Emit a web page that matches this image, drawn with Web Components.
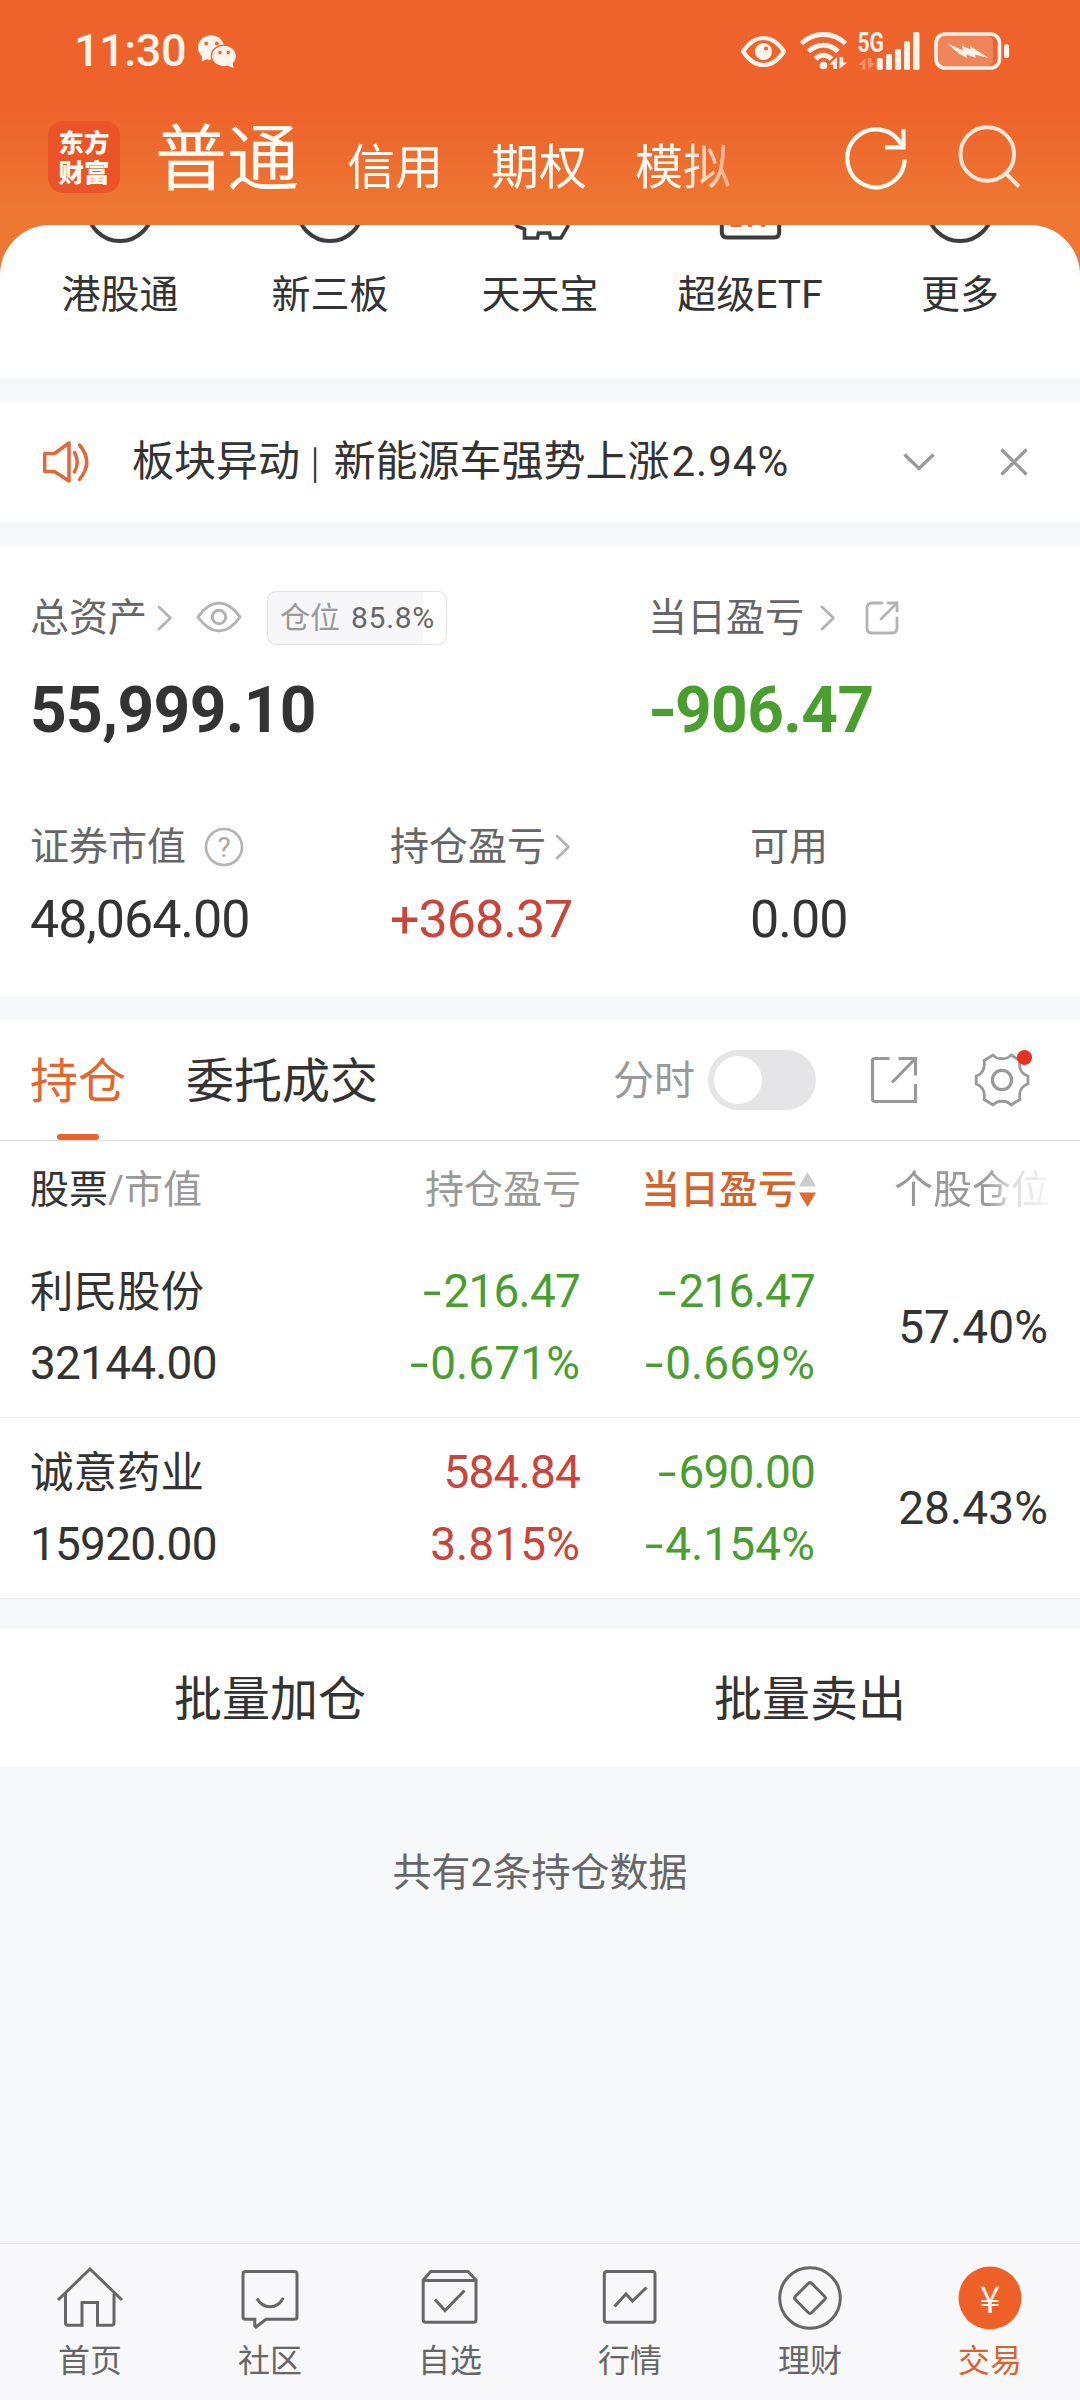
<!DOCTYPE html>
<html lang="zh-CN">
<head>
<meta charset="utf-8">
<title>交易</title>
<style>
  html, body {
    margin: 0;
    background: #f7f8fa;
  }
  body {
    width: 1080px;
    height: 2400px;
    overflow: hidden;
    font-family: Roboto, "Noto Sans CJK SC", sans-serif;
    font-size: 39px;
    color: #333;
  }
</style>
</head>
<body>
<trade-page></trade-page>

<script>
// name: [width, height, markup]
const ICONS = {
  wechat: [39, 33, `<g fill="#fff3ec"><ellipse cx="13" cy="12.5" rx="13" ry="12.3"/><path d="M4 20L3.800 26.500L11 23z"/></g>
    <g fill="#ee622b"><circle cx="8.300" cy="8.500" r="1.900"/><circle cx="18.800" cy="8.500" r="1.900"/><ellipse cx="26" cy="21" rx="13.300" ry="11.500"/></g>
    <g fill="#fff3ec"><ellipse cx="26" cy="21" rx="11.800" ry="10.200"/><path d="M28 30L35.500 33L34.500 26z"/></g>
    <g fill="#ee622b"><circle cx="22" cy="17.500" r="1.700"/><circle cx="30.200" cy="17.500" r="1.700"/></g>`],
  eyeSolid: [45, 31, `<path d="M2 15.500C8 6.500 15 2 22.500 2S37 6.500 43 15.500C37 24.500 30 29 22.500 29S8 24.500 2 15.500z" fill="none" stroke="#fff3ec" stroke-width="4.200" stroke-linejoin="round"/><circle cx="22.500" cy="15.500" r="8.600" fill="#fff3ec"/><circle cx="25" cy="12.500" r="2" fill="#ee622b"/>`],
  wifi: [47, 38, `<g fill="none" stroke="#fff3ec" stroke-width="5"><path d="M1.500 11.500C14 -.5 33 -.5 45.500 11.500"/><path d="M8.500 19.500C17 11 30 11 38 19.500"/><path d="M15.500 27C20 22 27 22 31.500 27"/></g><circle cx="23.500" cy="33.500" r="3.800" fill="#fff3ec"/>
    <path d="M37 25v12h-3.800v-4.500h-4zM39.500 25v12l7.500-6.500h-3.800V25z" fill="#fff3ec"/>`],
  signal: [62, 38, `<text x="-.5" y="19.500" font-family="Roboto" font-weight="700" font-size="27.500" textLength="26.500" lengthAdjust="spacingAndGlyphs" fill="#fff3ec">5G</text>
    <path d="M7.500 26v11.500H4.500V33H.5zM10 26v11.500l7.500-6.500h-4V26z" fill="#f58f68"/>
    <g fill="#fff3ec"><rect x="18.800" y="26" width="6" height="12" rx="1.800"/><rect x="28" y="22" width="6" height="16" rx="1.800"/><rect x="37" y="17" width="6" height="21" rx="1.800"/><rect x="46" y="9" width="6" height="29" rx="1.800"/><rect x="55" y="0" width="6.500" height="38" rx="1.800"/></g>`],
  battery: [75, 38, `<rect x="4" y="4" width="55" height="30" rx="5" fill="#f08459"/><rect x="2" y="2" width="63.500" height="34" rx="9" fill="none" stroke="#fff3ec" stroke-width="3.600"/><rect x="70" y="12" width="5" height="14" rx="2.500" fill="#fff3ec"/>
    <path d="M12.500 11L29 18.500L28 13.500L36.500 17.500L36 14L54.500 26L40.500 22.500L42 26L32.500 22.500L33 26L25.500 22z" fill="#fff3ec"/>`],
  refresh: [64, 64, `<g fill="none" stroke="#fffaf2" stroke-width="4.200"><path d="M60.700 33.500A28.700 29 0 1 1 57.500 19"/><path d="M59.500 3V21.300H41"/></g>`],
  search: [64, 64, `<g fill="none" stroke="#fee7d8" stroke-width="4"><circle cx="30.300" cy="28" r="26.800"/><path d="M48.500 47L62 60.500"/></g>`],
  menuRing: [72, 20, `<circle cx="36" cy="-16.500" r="32.500" fill="none" stroke="#3a3c40" stroke-width="4"/>`],
  menuPig: [72, 20, `<path d="M10 -3L13.500 1.500L20.500 4V13H33.500L34.500 8H45.500L46.500 13H57L64.500 0" fill="none" stroke="#3a3c40" stroke-width="3.600"/>`],
  menuEtf: [72, 20, `<path d="M7.800 -6V7Q7.800 12.500 13 12.500H60Q65.200 12.500 65.200 7V-6" fill="none" stroke="#3a3c40" stroke-width="4"/><g fill="#ee6a33"><rect x="16" y="-3" width="12" height="5" rx="2"/><rect x="34" y="-3" width="4" height="5" rx="1"/><rect x="47" y="-3" width="4" height="5" rx="1"/></g>`],
  speaker: [46, 42, `<g fill="none" stroke="#e0683a" stroke-width="3.500" stroke-linejoin="round" stroke-linecap="round"><path d="M1.700 12.500H11.500L26 2V40L11.500 30.500H1.700z"/><path d="M31.500 11.500Q37 21 31.500 31"/><path d="M36.500 4Q51 21 36.500 38.500"/></g>`],
  down: [32, 18, `<path d="M1.500 1.500L16 15.500L30.500 1.500" fill="none" stroke="#999" stroke-width="3.200"/>`],
  close: [28, 28, `<path d="M1.500 1.500L26.500 26.500M26.500 1.500L1.500 26.500" fill="none" stroke="#999" stroke-width="3.200"/>`],
  right: [16, 26, `<path d="M2 2L13.500 13L2 24" fill="none" stroke="#b3b3b3" stroke-width="2.800" stroke-linecap="round" stroke-linejoin="round"/>`],
  eye: [46, 32, `<g fill="none" stroke="#b3b3b3" stroke-width="3" stroke-linejoin="round"><path d="M2 16C9 6 15.500 2 23 2S37 6 44 16C37 26 30.500 30 23 30S9 26 2 16z"/><circle cx="23" cy="16" r="6.700"/></g>`],
  help: [40, 40, `<circle cx="20" cy="20" r="18" fill="none" stroke="#b3b3b3" stroke-width="2.600"/><text x="20" y="29.500" text-anchor="middle" font-family="Roboto" font-size="28" fill="#a8a8a8">?</text>`],
  shareSmall: [34, 34, `<g fill="none" stroke="#b3b3b3" stroke-width="2.800" stroke-linecap="round"><path d="M17 2H7Q2 2 2 7V27Q2 32 7 32H27Q32 32 32 27V17"/><path d="M23 2H32V10"/><path d="M31.500 2.500L16 18"/></g>`],
  share: [48, 48, `<g fill="none" stroke="#999" stroke-width="3.200"><path d="M19.500 2.500H5Q2.500 2.500 2.500 5V43Q2.500 45.500 5 45.500H45.500V28"/><path d="M28.500 2.500H45.500V19.500"/><path d="M45 3L22 26.500"/></g>`],
  gear: [54, 54, `<g fill="none" stroke="#999" stroke-width="2.800" stroke-linejoin="round"><path d="M18.200 2C22 7 32 7 36 2L45 7.500C43.500 15 46.500 21 53 23V31C46.500 33 43.500 39 45 46.500L36 52C32 47 22 47 18.200 52L9 46.500C10.500 39 7.500 33 1.200 31V23C7.500 21 10.500 15 9 7.500z"/><circle cx="27" cy="27" r="9.600" stroke-width="3.200"/></g><circle cx="49.500" cy="4.500" r="7.600" fill="#e63226"/>`],
  sort: [17, 35, `<path d="M8.500 0L17 14.500H0z" fill="#ccc"/><path d="M0 20.500H17L8.500 35z" fill="#e4682f"/>`],
  home: [68, 64, `<path d="M2 34L34 3L66 34" /><path d="M9.500 27.500V57Q9.500 59.300 12 59.300H26V36.500H41.500V59.300H55.500Q58 59.300 58 57V27.500"/>`],
  community: [68, 64, `<path d="M9.500 5.500H58.500Q61 5.500 61 8V51Q61 53.300 58.500 53.300H30L20 61L18.800 60V53.300H9.500Q7 53.300 7 51V8Q7 5.500 9.500 5.500z"/><path d="M21 32.500Q25.500 40.800 34 40.800T47.300 32"/>`],
  watch: [68, 64, `<path d="M7.200 14L14.800 5.500H52L60 14V54Q60 56.200 57.500 56.200H9.800Q7.200 56.200 7.200 54z"/><path d="M7.200 14.500H60"/><path d="M19 33.500L29 44.500L48.500 24.500"/>`],
  market: [68, 64, `<rect x="8.300" y="5.500" width="50.700" height="50.700" rx="2.500"/><path d="M18.500 40.500L30 28L36.500 35L50.500 21.500"/>`],
  wealth: [68, 64, `<circle cx="34" cy="32" r="30.300"/><rect x="22.500" y="20.500" width="23" height="23" rx="2.500" transform="rotate(45 34 32)"/>`],
  trade: [68, 64, `<circle cx="34" cy="32" r="31.500" fill="#ed6129" stroke="none"/><text x="34" y="46.500" text-anchor="middle" font-family="Noto Sans CJK SC" font-size="37" fill="#fff3e8" stroke="none">¥</text>`],
};

class AppIcon extends HTMLElement {
  constructor() {
    super();
    this.attachShadow({ mode: "open" });
  }

  connectedCallback() {
    const [w, h, markup] = ICONS[this.getAttribute("name")];
    this.shadowRoot.innerHTML = `
      <style>
        :host { display: block; flex: none; width: ${w}px; height: ${h}px; }
        svg { display: block; overflow: visible; }
      </style>
      <svg width="${w}" height="${h}" viewBox="0 0 ${w} ${h}">${markup}</svg>`;
  }
}
customElements.define("app-icon", AppIcon);

// Elements without logic only need a name and a template
function define(name, html) {
  const template = document.createElement("template");
  template.innerHTML = html;
  customElements.define(name, class extends HTMLElement {
    constructor() {
      super();
      this.attachShadow({ mode: "open" });
      this.shadowRoot.appendChild(template.content.cloneNode(true));
    }
  });
}

define("status-bar", `
  <style>
    :host { display: flex; align-items: center; height: 102px; padding: 0 71px 0 74px; }
    .time { width: 124px; font-size: 45px; font-weight: 500; line-height: 60px; letter-spacing: -.4px; color: #fff3ec; }
    .right { display: flex; align-items: center; margin-left: auto; }
    .right app-icon + app-icon { margin-left: 14px; }
    .right app-icon[name="signal"] { margin-left: 11px; }
  </style>
  <span class="time">11:30</span>
  <app-icon name="wechat"></app-icon>
  <div class="right">
    <app-icon name="eyeSolid"></app-icon>
    <app-icon name="wifi"></app-icon>
    <app-icon name="signal"></app-icon>
    <app-icon name="battery"></app-icon>
  </div>
`);

define("app-header", `
  <style>
    :host { display: block; height: 225px; background: linear-gradient(#ee622b 105px, #ed7733 210px); }
    .bar { display: flex; align-items: flex-start; padding-left: 48px; }
    .logo { width: 72px; height: 65px; padding-top: 7px; margin-top: 19px; border-radius: 15px; background: #eb5329;
      color: #fffaf2; font: 900 25.500px/30px Roboto, "Noto Sans CJK SC", sans-serif; text-align: center; }
    .logo span { display: block; }
    nav { display: flex; align-items: baseline; gap: 48px; width: 600px; height: 110px; margin: 8px 0 0 35px;
      overflow: hidden; white-space: nowrap; font-size: 48px; line-height: 100px; color: #fffaf2;
      -webkit-mask-image: linear-gradient(90deg, #000 530px, transparent 610px);
      mask-image: linear-gradient(90deg, #000 530px, transparent 610px); }
    .on { font-size: 72px; }
    app-icon { margin-top: 24px; }
    .refresh { margin-left: 89px; }
    .search { margin-left: 49px; }
  </style>
  <status-bar></status-bar>
  <div class="bar">
    <div class="logo"><span>东方</span><span>财富</span></div>
    <nav><span class="on">普通</span><span>信用</span><span>期权</span><span>模拟</span></nav>
    <app-icon class="refresh" name="refresh"></app-icon>
    <app-icon class="search" name="search"></app-icon>
  </div>
`);

class MenuItem extends HTMLElement {
  constructor() {
    super();
    this.attachShadow({ mode: "open" });
    this.shadowRoot.innerHTML = `
      <style>
        :host { display: flex; flex-direction: column; align-items: center; width: 210px; }
        .clip { height: 20px; overflow: hidden; }
        span { margin-top: 25px; line-height: 50px; white-space: nowrap; }
      </style>
      <div class="clip"><app-icon name="${this.getAttribute("icon")}"></app-icon></div>
      <span><slot></slot></span>`;
  }
}
customElements.define("menu-item", MenuItem);

define("menu-sheet", `
  <style>
    :host { display: block; height: 153px; background: #ed7733; }
    .sheet { display: flex; height: 153px; padding: 0 15px; border-radius: 50px 50px 0 0; background: #fff; }
  </style>
  <div class="sheet"><slot></slot></div>
`);

define("notice-bar", `
  <style>
    :host { display: flex; align-items: center; height: 120px; margin-top: 24px; padding: 0 52px 0 43px; background: #fff; }
    span { flex: 1; margin-left: 43px; font-size: 42px; line-height: 60px; white-space: pre; }
    b { font-weight: 400; letter-spacing: 1px; margin-left: 2px; }
    i { font-style: normal; font-size: 32px; letter-spacing: 3.500px; font-family: "Noto Sans CJK SC"; position: relative; top: -2px; }
    app-icon[name="close"] { margin-left: 65px; }
  </style>
  <app-icon name="speaker"></app-icon>
  <span>板块异动<i> | </i>新能源车强势上涨<b>2.94%</b></span>
  <app-icon name="down"></app-icon>
  <app-icon name="close"></app-icon>
`);

define("asset-figure", `
  <style>
    :host { display: block; }
    .label { display: flex; align-items: center; height: 54px; line-height: 54px; color: #666; white-space: nowrap; }
    .value { margin-top: 16px; font-size: 52px; line-height: 60px; letter-spacing: -1px; }
    :host([big]) .value { margin-top: 36px; font-size: 64px; font-weight: 700; letter-spacing: -.6px; }
    :host([up]) .value { color: #cb433a; }
    :host([down]) .value { color: #4a9d2f; }
    ::slotted(.minus) { display: inline-block; width: 27px; transform: scaleX(1.18); transform-origin: 0 50%; }
  </style>
  <div class="label"><slot name="label"></slot></div>
  <div class="value"><slot></slot></div>
`);

define("position-tag", `
  <style>
    :host { display: flex; align-items: center; box-sizing: border-box; width: 180px; height: 54px; padding-left: 12px;
      border: 1px solid #e3e3e6; border-radius: 9px; font-size: 30px; line-height: 50px; color: #666;
      letter-spacing: .7px; background: linear-gradient(90deg, #f7f7fa 155px, #fff 155px); }
    span { color: #999; margin-right: 11px; letter-spacing: 0; }
  </style>
  <span>仓位</span><slot></slot>
`);

define("asset-summary", `
  <style>
    :host { display: block; box-sizing: border-box; height: 450px; margin-top: 24px; padding: 45px 0 0 30px; background: #fff; }
    .top { display: grid; grid-template-columns: 618px 1fr; }
    .rest { display: grid; grid-template-columns: repeat(3, 360px); margin-top: 79px; }
  </style>
  <div class="top">
    <asset-figure big>
      <span slot="label">总资产</span>
      <app-icon slot="label" name="right" style="margin-left:10px"></app-icon>
      <app-icon slot="label" name="eye" style="margin:-3px 0 0 23px"></app-icon>
      <position-tag slot="label" style="margin-left:25px">85.8%</position-tag>
      55,999.10
    </asset-figure>
    <asset-figure big down>
      <span slot="label">当日盈亏</span>
      <app-icon slot="label" name="right" style="margin-left:16px"></app-icon>
      <app-icon slot="label" name="shareSmall" style="margin-left:29px"></app-icon>
      <span class="minus">-</span>906.47
    </asset-figure>
  </div>
  <div class="rest">
    <asset-figure>
      <span slot="label">证券市值</span>
      <app-icon slot="label" name="help" style="margin-left:18px"></app-icon>
      48,064.00
    </asset-figure>
    <asset-figure up>
      <span slot="label">持仓盈亏</span>
      <app-icon slot="label" name="right" style="margin-left:9px"></app-icon>
      +368.37
    </asset-figure>
    <asset-figure><span slot="label">可用</span>0.00</asset-figure>
  </div>
`);

define("holding-tabs", `
  <style>
    :host { display: flex; align-items: center; height: 120px; margin-top: 24px; padding: 0 51px 0 30px;
      border-bottom: 1px solid #dcdcdc; background: #fff; font-size: 48px; line-height: 60px; }
    .tab { display: flex; flex-direction: column; align-items: center; height: 120px; margin-right: 60px; }
    .tab span { margin-top: 32px; }
    .on { color: #e5652f; }
    .on::after { content: ""; width: 42px; height: 6px; margin-top: 22px; border-radius: 3px; background: #e5632f; }
    .minute { margin: 2px 0 0 auto; font-size: 41px; color: #999; }
    .toggle { box-sizing: border-box; width: 108px; height: 60px; margin: 0 54px 0 13px; padding: 6px; border-radius: 30px; background: #e5e5e7; }
    .toggle::before { content: ""; display: block; width: 48px; height: 48px; border-radius: 50%; background: #fff; }
    app-icon[name="gear"] { margin-left: 57px; }
  </style>
  <div class="tab on"><span>持仓</span></div>
  <div class="tab"><span>委托成交</span></div>
  <span class="minute">分时</span>
  <div class="toggle"></div>
  <app-icon name="share"></app-icon>
  <app-icon name="gear"></app-icon>
`);

const COLUMNS = "display: grid; grid-template-columns: 250px 300px 235px 233px; padding: 0 32px 0 30px;";

define("holding-head", `
  <style>
    :host { ${COLUMNS} align-items: center; height: 96px; background: #fff; line-height: 50px; color: #999; white-space: nowrap; text-align: right; }
    span { margin: 1px -1px 0 0; }
    .name { text-align: left; }
    .name b { font-weight: 400; color: #333; }
    .sorted { display: flex; align-items: center; justify-content: flex-end; gap: 2px; color: #d4632e; font-weight: 500; }
    .faded { margin-right: -2px; -webkit-mask-image: linear-gradient(90deg, #000 172px, rgba(0,0,0,.35) 196px, rgba(0,0,0,.1) 233px); }
  </style>
  <span class="name"><b>股票</b>/市值</span>
  <span>持仓盈亏</span>
  <span class="sorted">当日盈亏<app-icon name="sort"></app-icon></span>
  <span class="faded">个股仓位</span>
`);

class HoldingRow extends HTMLElement {
  constructor() {
    super();
    this.attachShadow({ mode: "open" });
    const get = (name) => this.getAttribute(name);
    // The minus is drawn wider than the font's own hyphen
    const signed = (text) => text.replace("-", "<i>-</i>");
    const pair = (text) => {
      const [amount, percent] = text.split(" ");
      const tone = amount.startsWith("-") ? "down" : "up";
      return `<div class="num ${tone}"><span>${signed(amount)}</span><span class="pct">${signed(percent)}</span></div>`;
    };
    this.shadowRoot.innerHTML = `
      <style>
        :host { ${COLUMNS} align-items: center; height: 180px; border-bottom: 1px solid #ececee; background: #fff; }
        div { display: flex; flex-direction: column; font-size: 46px; line-height: 72px; letter-spacing: -.8px; }
        .name { font-size: 43.5px; letter-spacing: 0; position: relative; top: 2px; }
        .num { text-align: right; }
        .pct { letter-spacing: .1px; }
        i { display: inline-block; width: 20px; font-style: normal; text-align: left; transform: scaleX(1.45); transform-origin: 0 50%; }
        .up { color: #cb433a; }
        .down { color: #4a9d2f; }
      </style>
      <div><span class="name">${get("name")}</span><span>${get("worth")}</span></div>
      ${pair(get("total"))}
      ${pair(get("today"))}
      <div class="num"><span class="pct">${get("share")}</span></div>`;
  }
}
customElements.define("holding-row", HoldingRow);

define("batch-actions", `
  <style>
    :host { display: flex; height: 138px; margin-top: 30px; background: #fff; font-size: 48px; }
    span { flex: 1; text-align: center; line-height: 141px; }
    span:first-child { border-right: 1px solid #f4f4f6; }
  </style>
  <span>批量加仓</span><span>批量卖出</span>
`);

class TabItem extends HTMLElement {
  constructor() {
    super();
    this.attachShadow({ mode: "open" });
    this.shadowRoot.innerHTML = `
      <style>
        :host { display: flex; flex-direction: column; align-items: center; width: 180px; padding-top: 22px; }
        app-icon { fill: none; stroke: #666; stroke-width: 3; }
        span { margin-top: 10px; font-size: 32px; line-height: 42px; color: #666; }
        :host([active]) span { color: #d9632f; }
      </style>
      <app-icon name="${this.getAttribute("icon")}"></app-icon>
      <span><slot></slot></span>`;
  }
}
customElements.define("tab-item", TabItem);

define("trade-page", `
  <style>
    :host { display: flex; flex-direction: column; height: 2400px; }
    .count { margin-top: 79px; line-height: 54px; text-align: center; color: #666; }
    footer { display: flex; box-sizing: border-box; height: 157px; margin-top: auto; border-top: 1px solid #e4e4e6; background: #f8f8fa; }
  </style>
  <app-header></app-header>
  <menu-sheet>
    <menu-item icon="menuRing">港股通</menu-item>
    <menu-item icon="menuRing">新三板</menu-item>
    <menu-item icon="menuPig">天天宝</menu-item>
    <menu-item icon="menuEtf">超级ETF</menu-item>
    <menu-item icon="menuRing">更多</menu-item>
  </menu-sheet>
  <notice-bar></notice-bar>
  <asset-summary></asset-summary>
  <holding-tabs></holding-tabs>
  <holding-head></holding-head>
  <holding-row name="利民股份" worth="32144.00" total="-216.47 -0.671%" today="-216.47 -0.669%" share="57.40%"></holding-row>
  <holding-row name="诚意药业" worth="15920.00" total="584.84 3.815%" today="-690.00 -4.154%" share="28.43%"></holding-row>
  <batch-actions></batch-actions>
  <div class="count">共有2条持仓数据</div>
  <footer>
    <tab-item icon="home">首页</tab-item>
    <tab-item icon="community">社区</tab-item>
    <tab-item icon="watch">自选</tab-item>
    <tab-item icon="market">行情</tab-item>
    <tab-item icon="wealth">理财</tab-item>
    <tab-item icon="trade" active>交易</tab-item>
  </footer>
`);
</script>
</body>
</html>
